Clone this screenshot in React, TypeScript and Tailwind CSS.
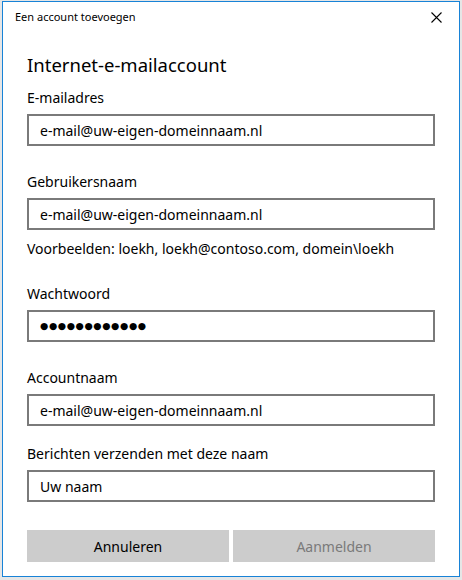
const font = { fontFamily: '"Noto Sans", "Open Sans", sans-serif' };

function Field({ label, value, className = "" }: { label: string; value: string; className?: string }) {
  return (
    <div className={`flex flex-col ${className}`}>
      <label className="h-[20px] text-[14px] leading-[22px] text-black">{label}</label>
      <div className="mt-[7px] flex h-[32px] items-center border-2 border-[#7a7a7a] bg-white pl-[11px] text-[14px] text-black">
        {value}
      </div>
    </div>
  );
}

export default function App() {
  return (
    <div className="h-[580px] w-[462px] bg-[#e6e6e6] pl-[2px] pt-[1px]" style={font}>
      <div className="flex h-[576px] w-[458px] flex-col border border-[#1883d7] bg-white">
        <header className="flex h-[30px] items-center justify-between pl-[12px] pr-[17px]">
          <span className="text-[11px] leading-[16px] text-black">Een account toevoegen</span>
          <svg width="11" height="11" viewBox="0 0 11 11" aria-hidden="true">
            <path d="M0.5 0.5L10.5 10.5M10.5 0.5L0.5 10.5" stroke="#000" strokeWidth="1.1" fill="none" />
          </svg>
        </header>

        <main className="flex flex-col px-[24px]">
          <h1 className="mt-[19px] h-[28px] text-[18.5px] leading-[28px] text-black">Internet-e-mailaccount</h1>

          <Field className="mt-[8px]" label="E-mailadres" value="e-mail@uw-eigen-domeinnaam.nl" />
          <Field className="mt-[25px]" label="Gebruikersnaam" value="e-mail@uw-eigen-domeinnaam.nl" />
          <p className="mt-[9px] h-[20px] text-[14px] leading-[20px] text-black">
            Voorbeelden: loekh, loekh@contoso.com, domein\loekh
          </p>

          <div className="mt-[24px] flex flex-col">
            <label className="h-[20px] text-[14px] leading-[22px] text-black">Wachtwoord</label>
            <div className="mt-[7px] flex h-[32px] items-center border-2 border-[#7a7a7a] bg-white pl-[11px]">
              <span className="text-[9.5px] tracking-[0.6px] text-black" style={{ fontFamily: '"DejaVu Sans", sans-serif' }}>
                ●●●●●●●●●●●●
              </span>
            </div>
          </div>

          <Field className="mt-[25px]" label="Accountnaam" value="e-mail@uw-eigen-domeinnaam.nl" />
          <Field className="mt-[17px]" label="Berichten verzenden met deze naam" value="Uw naam" />

          <div className="mt-[28px] grid grid-cols-2 gap-[4px]">
            <button className="h-[32px] bg-[#cccccc] pt-[1px] text-[14px] text-black">Annuleren</button>
            <button className="h-[32px] bg-[#cccccc] pt-[1px] text-[14px] text-[#7a7a7a]">Aanmelden</button>
          </div>
        </main>
      </div>
    </div>
  );
}
